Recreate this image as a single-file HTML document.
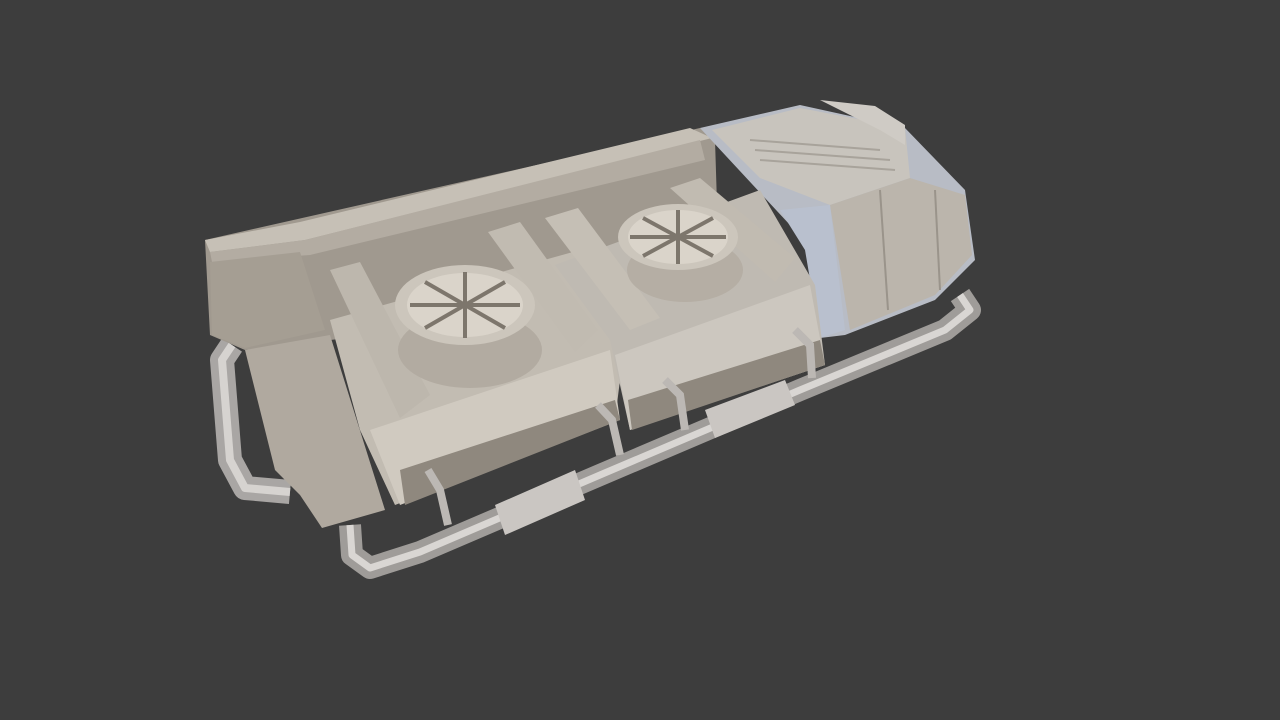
<!DOCTYPE html>
<html><head><meta charset="utf-8"><style>html,body{margin:0;padding:0;background:#3d3d3d;}svg{display:block}</style></head>
<body>
<svg width="1280" height="720" viewBox="0 0 1280 720" xmlns="http://www.w3.org/2000/svg">
<rect width="1280" height="720" fill="#3d3d3d"/>
<!-- left pipe -->
<path d="M232 345 L222 360 L230 460 L245 488 L290 492" fill="none" stroke="#a9a6a4" stroke-width="24" stroke-linejoin="round"/>
<path d="M232 345 L222 360 L230 460 L245 488 L290 492" fill="none" stroke="#d6d3d0" stroke-width="8" stroke-linejoin="round"/>
<!-- back wall -->
<polygon points="205,240 700,128 715,140 720,300 330,340 245,350 210,335" fill="#a0998f"/>
<polygon points="205,240 300,222 690,128 712,138 305,240 210,252" fill="#c6c0b6"/>
<polygon points="210,252 305,240 700,140 705,160 310,255 212,262" fill="#b3aca2"/>
<polygon points="210,262 300,252 325,330 245,348 212,335" fill="#a59e93"/>
<!-- right box -->
<polygon points="700,128 800,105 905,128 965,190 975,260 935,300 845,335 820,338 812,260 790,225" fill="#b8bcc5"/>
<polygon points="712,130 800,108 905,128 910,178 830,205 760,178" fill="#c8c4bd"/>
<g stroke="#a8a39b" stroke-width="2"><line x1="750" y1="140" x2="880" y2="150"/><line x1="755" y1="150" x2="890" y2="160"/><line x1="760" y1="160" x2="895" y2="170"/></g>
<polygon points="830,205 910,178 965,195 972,255 935,295 850,330" fill="#bbb5ac"/>
<g stroke="#9a948b" stroke-width="2"><line x1="880" y1="190" x2="888" y2="310"/><line x1="935" y1="190" x2="940" y2="290"/></g>
<polygon points="820,100 875,106 905,125 905,145 880,130" fill="#cfcbc5"/>
<polygon points="780,210 830,205 845,330 820,338 805,250" fill="#b9c0ce"/>
<!-- left front panel -->
<polygon points="245,350 330,335 385,510 322,528 300,495 275,470" fill="#b0a99f"/>
<!-- fan unit 1 -->
<polygon points="330,320 580,250 625,340 615,420 395,505 360,430" fill="#c2bcb2"/>
<polygon points="370,430 610,350 620,420 400,505" fill="#d0cac0"/>
<polygon points="400,470 615,400 620,420 405,505" fill="#8f887e"/>
<!-- fan unit 2 -->
<polygon points="555,265 760,190 815,285 825,365 630,430 610,340" fill="#bfbab2"/>
<polygon points="615,355 810,285 825,365 630,430" fill="#ccc7bf"/>
<polygon points="628,400 820,340 825,365 632,430" fill="#8f887e"/>
<!-- ducts -->
<polygon points="330,270 360,262 430,395 400,418" fill="#bdb7ad"/>
<polygon points="488,232 520,222 598,330 575,352" fill="#c1bbb1"/>
<polygon points="545,218 578,208 660,318 630,330" fill="#c5bfb5"/>
<polygon points="670,188 700,178 795,258 775,282" fill="#c1bbb1"/>
<!-- fans -->
<ellipse cx="470" cy="350" rx="72" ry="38" fill="#b2aba1"/>
<ellipse cx="465" cy="305" rx="70" ry="40" fill="#ccc6bc"/>
<ellipse cx="465" cy="305" rx="58" ry="32" fill="#dad4ca"/>
<g stroke="#7d766c" stroke-width="4"><line x1="410" y1="305" x2="520" y2="305"/><line x1="465" y1="272" x2="465" y2="338"/><line x1="425" y1="282" x2="505" y2="328"/><line x1="505" y1="282" x2="425" y2="328"/></g>
<ellipse cx="685" cy="270" rx="58" ry="32" fill="#b5aea4"/>
<ellipse cx="678" cy="237" rx="60" ry="33" fill="#ccc6bc"/>
<ellipse cx="678" cy="237" rx="50" ry="27" fill="#dad4ca"/>
<g stroke="#7d766c" stroke-width="4"><line x1="630" y1="237" x2="726" y2="237"/><line x1="678" y1="210" x2="678" y2="264"/><line x1="643" y1="218" x2="713" y2="256"/><line x1="713" y1="218" x2="643" y2="256"/></g>
<!-- front pipe -->
<path d="M350 525 L352 555 L370 568 L420 552 L600 475 L800 390 L945 330 L970 310 L960 295" fill="none" stroke="#9f9c99" stroke-width="22" stroke-linejoin="round"/>
<path d="M350 525 L352 555 L370 568 L420 552 L600 475 L800 390 L945 330 L970 310 L960 295" fill="none" stroke="#d9d6d3" stroke-width="7" stroke-linejoin="round"/>
<g fill="#cac6c2"><polygon points="495,505 575,470 585,500 505,535"/><polygon points="705,410 785,380 795,405 715,438"/></g>
<g fill="none" stroke="#bcb8b4" stroke-width="8"><path d="M428 470 L440 490 L448 525"/><path d="M598 405 L612 420 L620 455"/><path d="M665 380 L680 395 L685 430"/><path d="M795 330 L810 345 L812 378"/></g>
</svg>
</body></html>
